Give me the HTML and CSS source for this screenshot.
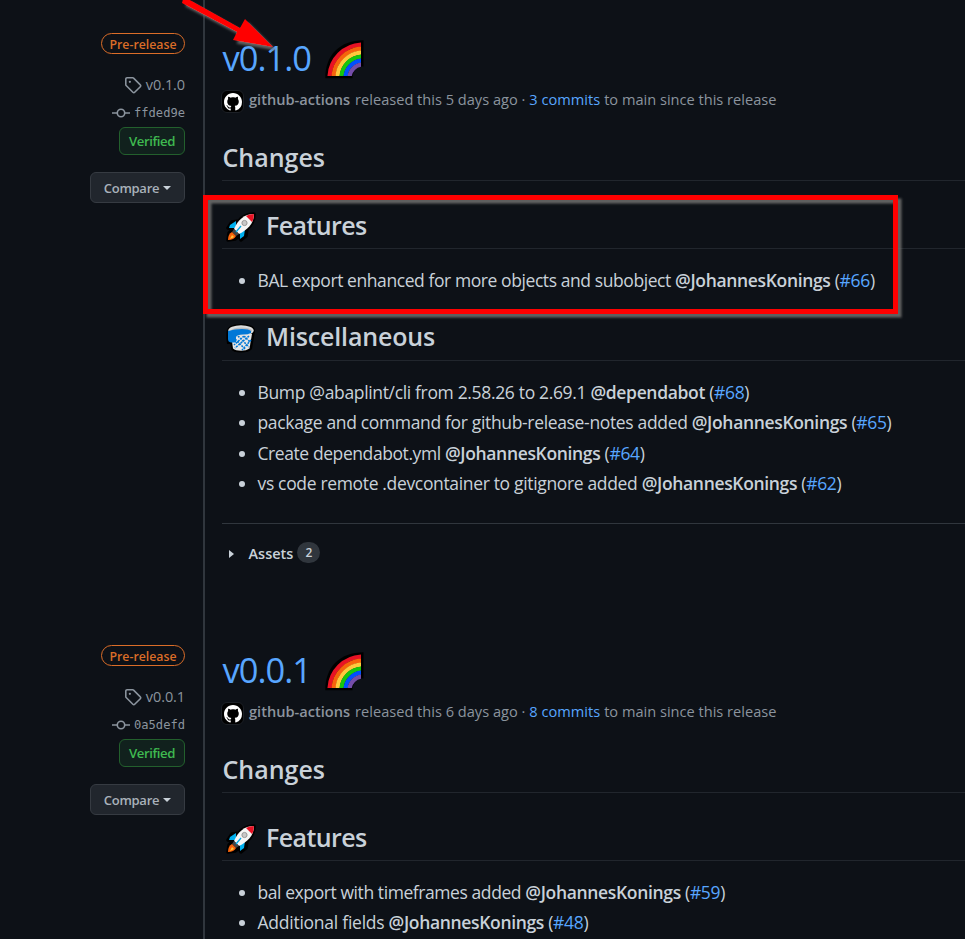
FILE: index.html
```
<!DOCTYPE html>
<html lang="en">
<head>
<meta charset="utf-8">
<title>Releases</title>
<link rel="stylesheet" href="styles.css">
</head>
<body>
<svg class="defs" width="0" height="0" aria-hidden="true">
  <clipPath id="arc"><path d="M0 0h36v36H0z"/></clipPath>
  <symbol id="tag" viewBox="0 0 16 16"><path d="M1.600 2.700v5c0 .3.1.6.3.8l6 6c.5.5 1.200.5 1.600 0l5-5c.5-.5.5-1.200 0-1.600l-6-6a1 1 0 0 0-.8-.3h-5c-.6 0-1.100.5-1.100 1.100z" fill="none" stroke="#8b949e" stroke-width="1.400"/><circle cx="5.200" cy="5.200" r="1" fill="#8b949e"/></symbol>
  <symbol id="commit" viewBox="0 0 18 16"><path d="M0 8h5M13 8h5" stroke="#8b949e" stroke-width="1.500"/><circle cx="9" cy="8" r="3.700" fill="none" stroke="#8b949e" stroke-width="1.600"/></symbol>
  <symbol id="rainbow" viewBox="0 0 39 39"><path d="M.3 38.300C.3 15 15 .3 38.500 .3v26.200H36q-6 1-8.500 9v2.800z" fill="#000"/><g fill="none" stroke-width="4.200" clip-path="url(#arc)"><circle cx="38" cy="38" r="33.500" stroke="#e81224"/><circle cx="38" cy="38" r="29.500" stroke="#f7630c"/><circle cx="38" cy="38" r="25.500" stroke="#ffc83d"/><circle cx="38" cy="38" r="21.500" stroke="#16c60c"/><circle cx="38" cy="38" r="17.500" stroke="#0050ff"/><circle cx="38" cy="38" r="13.500" stroke="#744da9"/></g></symbol>
  <symbol id="rocket" viewBox="0 0 30 30"><g stroke="#000" stroke-width="3.500" stroke-linejoin="round"><path d="M28 2c-8 0-12 3-15 7l-7 1-4 6 5 1-4 4-1 7 7-1 4-3 2 4 5-4 1-7c5-4 7-8 7-15z"/></g><path d="M10 9l-6 4-1 3 7 0zM14 20l0 7 4-3 1-7z" fill="#00b0ee"/><path d="M28 2C18 2 12 8 8 17l5 5C21 18 28 12 28 2z" fill="#f5f5f5"/><path d="M28 2q-5 0-8 2l6 6q2-3 2-8z" fill="#e81224"/><circle cx="18.500" cy="11" r="2.600" fill="#c8c8c8" stroke="#999"/><path d="M8 17l5 5-3 2-4-4z" fill="#444"/><path d="M6 20l4 4q-2 4-8 4 0-6 4-8z" fill="#f7630c"/><path d="M6 23l2 2-4 2z" fill="#ffc83d"/><path d="M10 20l5-6" stroke="#00a7e5" stroke-width="1.300"/></symbol>
  <symbol id="basket" viewBox="0 0 30 30"><path d="M.5 9Q1 1 15 1t14 7l-3 18q-3 3.500-11 3.500T5 26l-.5-5H1q-1-6-.5-12z" fill="#000"/><path d="M5 11h21l-2.500 14.500q-3 2.200-8.500 2.200t-8-2.200z" fill="#e6e6e6"/><path d="M7 14l12 12M12 13l11 11M18 13l6 6M23 13L9 25M18 13L8 22M25 17l-9 10" stroke="#0078d7" stroke-width="1.600" stroke-dasharray="2 1"/><ellipse cx="15" cy="7.500" rx="12.700" ry="5.300" fill="#ddd"/><ellipse cx="15.500" cy="7.800" rx="10.500" ry="3.200" fill="#b8bcc0"/><path d="M2 8q7-2 14-2t9 2v2q-3 1.500-8 1.500-6 0-7 2.500v5.500H5Q2 19 2 16z" fill="#0078d7"/></symbol>
  <symbol id="octocat" viewBox="0 0 16 16"><path fill="#fff" d="M8 0C3.580 0 0 3.580 0 8c0 3.540 2.290 6.530 5.470 7.590.4.070.55-.17.55-.38 0-.19-.01-.82-.01-1.490-2.010.37-2.530-.49-2.690-.94-.09-.23-.48-.94-.82-1.130-.28-.15-.68-.52-.01-.53.63-.01 1.080.58 1.230.82.72 1.210 1.870.87 2.330.66.07-.52.28-.87.51-1.070-1.780-.2-3.640-.89-3.640-3.950 0-.87.31-1.590.82-2.150-.08-.2-.36-1.020.08-2.120 0 0 .67-.21 2.200.82.64-.18 1.320-.27 2-.27s1.360.09 2 .27c1.530-1.040 2.200-.82 2.200-.82.44 1.100.16 1.920.08 2.120.51.56.82 1.270.82 2.150 0 3.070-1.870 3.750-3.650 3.950.29.25.54.73.54 1.480 0 1.070-.01 1.930-.01 2.200 0 .21.15.46.55.38A8.010 8.010 0 0 0 16 8c0-4.420-3.580-8-8-8z"/></symbol>
</svg>

<section class="release">
  <aside class="side">
    <span class="pre">Pre-release</span>
    <span class="meta"><svg class="tag"><use href="#tag"/></svg><span>v0.1.0</span></span>
    <span class="meta sha"><svg class="commit"><use href="#commit"/></svg><span>ffded9e</span></span>
    <span class="verified">Verified</span>
    <button class="compare"><span>Compare</span><i class="caret"></i></button>
  </aside>
  <main class="main">
    <h1><span>v0.1.0</span><svg class="rainbow"><use href="#rainbow"/></svg></h1>
    <p class="byline"><span class="avatar"><svg><use href="#octocat"/></svg></span><b>github-actions</b> <span>released this 5 days ago ·</span> <a>3 commits</a> <span>to main since this release</span></p>
    <h2 class="changes"><span>Changes</span></h2>
    <h2 class="features"><svg class="emoji"><use href="#rocket"/></svg><span>Features</span></h2>
    <ul class="one">
      <li><span class="tight">BAL export enhanced for more objects and subobject</span> <b>@JohannesKonings</b> (<a>#66</a>)</li>
    </ul>
    <h2 class="misc"><svg class="emoji"><use href="#basket"/></svg><span>Miscellaneous</span></h2>
    <ul>
      <li>Bump @abaplint/cli from 2.58.26 to 2.69.1 <b>@dependabot</b> (<a>#68</a>)</li>
      <li>package and command for github-release-notes added <b>@JohannesKonings</b> (<a>#65</a>)</li>
      <li><span class="tight">Create dependabot.yml</span> <b>@JohannesKonings</b> (<a>#64</a>)</li>
      <li>vs code remote .devcontainer to gitignore added <b>@JohannesKonings</b> (<a>#62</a>)</li>
    </ul>
    <div class="assets"><i class="tri"></i><b>Assets</b><span class="count">2</span></div>
  </main>
</section>
<section class="release last">
  <aside class="side">
    <span class="pre">Pre-release</span>
    <span class="meta"><svg class="tag"><use href="#tag"/></svg><span>v0.0.1</span></span>
    <span class="meta sha"><svg class="commit"><use href="#commit"/></svg><span>0a5defd</span></span>
    <span class="verified">Verified</span>
    <button class="compare"><span>Compare</span><i class="caret"></i></button>
  </aside>
  <main class="main">
    <h1><span>v0.0.1</span><svg class="rainbow"><use href="#rainbow"/></svg></h1>
    <p class="byline"><span class="avatar"><svg><use href="#octocat"/></svg></span><b>github-actions</b> <span>released this 6 days ago ·</span> <a>8 commits</a> <span>to main since this release</span></p>
    <h2 class="changes"><span>Changes</span></h2>
    <h2 class="features"><svg class="emoji"><use href="#rocket"/></svg><span>Features</span></h2>
    <ul>
      <li><span class="tight">bal export with timeframes added</span> <b>@JohannesKonings</b> (<a>#59</a>)</li>
      <li><span class="loose">Additional fields</span> <b>@JohannesKonings</b> (<a>#48</a>)</li>
    </ul>
  </main>
</section>
<svg class="markup" width="965" height="330" viewBox="0 0 965 330" aria-hidden="true">
  <defs><filter id="shade" x="-5%" y="-10%" width="110%" height="120%"><feDropShadow dx="3.500" dy="3.500" stdDeviation="1" flood-color="#70706e" flood-opacity=".85"/></filter></defs>
  <g filter="url(#shade)"><rect x="205.500" y="197.500" width="690" height="114" fill="none" stroke="red" stroke-width="5"/></g>
  <g filter="url(#shade)"><path d="M183 -1l-1 4 55 29-4 8 40 7-28-28-5 9-52-29z" fill="red"/></g>
</svg>
</body>
</html>
```
FILE: styles.css
```
* { box-sizing: border-box; }
body { margin: 0; width: 965px; height: 939px; overflow: hidden; background: #0d1117; color: #c9d1d9; font-family: "Open Sans", sans-serif; font-size: 17.500px; }
.defs { position: absolute; }
a { color: #58a6ff; }
b { font-weight: 600; }
.release { display: grid; grid-template-columns: 203px 762px; height: 612px; }
.release.last { height: 327px; overflow: hidden; }
.side { display: flex; flex-direction: column; align-items: flex-end; padding: 33px 18px 0 0; color: #8b949e; }
.pre { width: 84px; height: 21px; border: 1px solid #db6d28; border-radius: 11px; color: #db6d28; font-size: 12.300px; font-weight: 600; line-height: 21px; text-align: center; }
.meta { display: flex; align-items: center; gap: 4px; height: 20px; margin-top: 21px; font-size: 14.500px; line-height: 18px; letter-spacing: -.1px; }
.meta span { margin-top: -1px; }
.tag { width: 18px; height: 18px; }
.meta.sha { margin-top: 8px; height: 20px; font-family: "DejaVu Sans Mono", monospace; font-size: 12.100px; letter-spacing: 0; }
.sha span { margin-top: 0; }
.commit { width: 18px; height: 16px; }
.verified { width: 66px; height: 28px; margin-top: 4px; border: 1px solid #23602d; border-radius: 6px; background: #11211d; color: #3fb950; font-size: 13.200px; font-weight: 600; letter-spacing: -.4px; line-height: 26px; text-align: center; }
.compare { display: flex; align-items: center; justify-content: center; gap: 4px; width: 95px; height: 31px; margin-top: 17px; padding: 0; border: 1px solid #363b42; border-radius: 6px; background: #21262d; color: #a9b1ba; font: 600 13px "Open Sans", sans-serif; letter-spacing: -.25px; }
.caret { border: 4.500px solid transparent; border-top-color: #c9d1d9; border-bottom: 0; }
.main { border-left: 2px solid #30363d; padding: 35px 0 0 17px; }
h1 { display: flex; align-items: center; height: 46px; margin: 0; color: #58a6ff; font-weight: 400; font-size: 34.500px; letter-spacing: -1px; }
h1 span { width: 103px; margin-top: -2px; padding-left: .500px; }
.rainbow { width: 39px; height: 39px; margin-top: 3px; }
.byline { display: flex; align-items: center; gap: 4px; height: 26px; margin: 6px 0 0; color: #8b949e; font-size: 14.600px; line-height: 20px; }
.byline > * { margin-top: -2px; }
.byline .avatar { display: grid; place-items: center; width: 23px; height: 23px; margin: 3px 0 0 -1px; background: #000; border: 1px solid #1c2026; border-radius: 6px; }
.byline b { margin-left: 1px; margin-right: 1px; }
.avatar svg { width: 18px; height: 18px; }
h2 { display: flex; align-items: center; margin: 0; border-bottom: 1px solid #21262d; font-weight: 600; font-size: 25px; line-height: 34px; }
h2 span { margin-top: -3px; }
.changes { height: 68px; padding: 21px 0 0 .500px; }
.changes span { margin-top: -1px; }
.features { height: 68px; padding-top: 24px; letter-spacing: -.6px; }
.misc { height: 46px; letter-spacing: -.15px; }
.emoji { width: 30px; height: 30px; margin: 0 10px 0 4px; }
ul { margin: 0; padding: 16px 0 0 35.500px; height: 162px; }
ul.one { height: 66px; }
li { height: 30.300px; line-height: 30px; white-space: nowrap; letter-spacing: -.34px; }
li .tight { letter-spacing: -.42px; }
li .loose { letter-spacing: -.25px; }
.assets { display: flex; align-items: center; height: 60px; border-top: 1px solid #30363d; font-size: 14.500px; line-height: 20px; }
.tri { margin: 0 14.500px 0 7px; border: 4px solid transparent; border-left: 5px solid #c9d1d9; border-right: 0; }
.count { width: 23px; height: 21px; margin: -2px 0 0 4px; border-radius: 11px; background: #30363d; font-size: 12px; font-weight: 600; line-height: 21px; text-align: center; }
.markup { position: absolute; left: 0; top: 0; }
```
